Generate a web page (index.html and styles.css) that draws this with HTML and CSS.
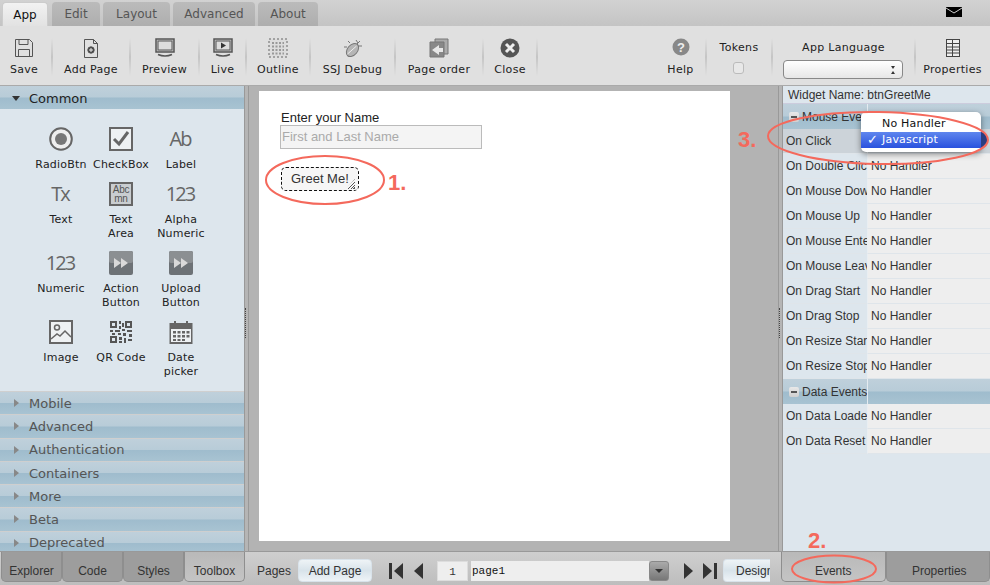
FILE: index.html
```html
<!DOCTYPE html>
<html lang="en">
<head>
  <meta charset="UTF-8">
  <title>App Builder</title>
  <link rel="stylesheet" href="styles.css">
</head>
<body>

  <div class="tabbar">
    <div class="tab active">App</div>
    <div class="tab t-edit">Edit</div>
    <div class="tab t-layout">Layout</div>
    <div class="tab t-adv">Advanced</div>
    <div class="tab t-about">About</div>
    <svg class="mail" width="16" height="10" viewBox="0 0 16 10"><rect width="16" height="10" fill="#000"/><path d="M0 1l8 5 8-5" fill="none" stroke="#ccc" stroke-width="1"/></svg>
  </div>

  <div class="toolbar">
    <div class="tool first">
      <svg width="20" height="20" viewBox="0 0 20 20" fill="none" stroke="#555"><path d="M1.500 1.500h14l3 3v14h-17z"/><path d="M5 1.500v5h9v-5M4.500 18.500v-7h11v7"/></svg>
      <span>Save</span>
    </div>
    <div class="tool">
      <svg width="20" height="20" viewBox="0 0 20 20" fill="none" stroke="#555"><path d="M3.500 1.500h9l4 4v14h-13z"/><path d="M12.500 1.500v4h4"/><circle cx="10" cy="12" r="3.200" fill="#444"/><path d="M8 12h4M10 10v4" stroke="#eee"/></svg>
      <span>Add Page</span>
    </div>
    <div class="tool">
      <svg width="20" height="20" viewBox="0 0 20 20" fill="none" stroke="#555"><rect x="1" y="1" width="18" height="13" fill="#ccc" stroke-width="1.500"/><rect x="3" y="3" width="14" height="9" fill="#ddd"/><path d="M3 16.500q7 3 14 0" stroke-width="1.500"/></svg>
      <span>Preview</span>
    </div>
    <div class="tool">
      <svg width="20" height="20" viewBox="0 0 20 20" fill="none" stroke="#555"><rect x="1" y="1" width="18" height="13" fill="#ccc" stroke-width="1.500"/><rect x="3" y="3" width="14" height="9" fill="#ddd"/><path d="M8 4.500l5 3-5 3z" fill="#333" stroke="none"/><path d="M3 16.500q7 3 14 0" stroke-width="1.500"/></svg>
      <span>Live</span>
    </div>
    <div class="tool">
      <svg width="20" height="20" viewBox="0 0 20 20" fill="none"><rect x="1" y="1" width="18" height="18" fill="#ddd" stroke="#666" stroke-dasharray="2 2"/><path d="M4 5h12M4 8.500h12M4 12h12M4 15.500h12" stroke="#999" stroke-width="2" stroke-dasharray="2 1.500"/></svg>
      <span>Outline</span>
    </div>
    <div class="tool">
      <svg width="20" height="20" viewBox="0 0 20 20" fill="none" stroke="#777"><path d="M13 2l2 3M17 3l-3 3M16 8h3M7 5L5 3M4 9H1"/><ellipse cx="9.500" cy="12" rx="5" ry="7.500" transform="rotate(40 9.500 12)" fill="#b5b5b5"/><path d="M4.500 16l9-8" stroke="#eee"/></svg>
      <span>SSJ Debug</span>
    </div>
    <div class="tool">
      <svg width="20" height="20" viewBox="0 0 20 20"><path d="M6 1h13v15H6z" fill="#aaa" stroke="#777"/><path d="M1 4h14v15H1z" fill="#888" stroke="#777"/><path d="M3 12l7-5v3h4v4h-4v3z" fill="#e6e6e6"/></svg>
      <span>Page order</span>
    </div>
    <div class="tool">
      <svg width="20" height="20" viewBox="0 0 20 20"><circle cx="10" cy="10" r="9.500" fill="#555"/><path d="M6 6l8 8M14 6l-8 8" stroke="#eee" stroke-width="3"/></svg>
      <span>Close</span>
    </div>
    <div class="tool-space"></div>
    <div class="tool">
      <svg width="18" height="20" viewBox="0 0 18 20"><circle cx="9" cy="9" r="8.500" fill="#888"/><text x="9" y="13.500" class="help-mark">?</text></svg>
      <span>Help</span>
    </div>
    <div class="tool top">
      <span>Tokens</span>
      <div class="check"></div>
    </div>
    <div class="tool top">
      <span>App Language</span>
      <div class="lang-select"><i class="updown"></i></div>
    </div>
    <div class="tool last">
      <svg width="16" height="20" viewBox="0 0 16 20" fill="none" stroke="#444"><rect x="1.500" y="1.500" width="13" height="17" fill="#eee"/><path d="M1.500 5.500h13M1.500 9h13M1.500 12h13M1.500 15h13M7.500 1.500v17"/></svg>
      <span>Properties</span>
    </div>
  </div>

  <div class="main">
    <div class="left-panel">
      <div class="acc-head open"><i class="arrow-down"></i>Common</div>
      <div class="palette">
        <div class="widget">
          <svg width="24" height="24" viewBox="0 0 24 24"><circle cx="12" cy="12" r="10.800" fill="#eee" stroke="#666" stroke-width="2"/><circle cx="12" cy="12" r="6" fill="#777"/></svg>
          <span>RadioBtn</span>
        </div>
        <div class="widget">
          <svg width="24" height="24" viewBox="0 0 24 24"><rect x="1" y="1" width="22" height="22" fill="#eef1f3" stroke="#666" stroke-width="2"/><path d="M5 12l5 5 9-12" fill="none" stroke="#666" stroke-width="3"/></svg>
          <span>CheckBox</span>
        </div>
        <div class="widget">
          <div class="glyph">Ab</div>
          <span>Label</span>
        </div>
        <div class="widget">
          <div class="glyph">Tx</div>
          <span>Text</span>
        </div>
        <div class="widget">
          <div class="glyph-box">Abc<br>mn</div>
          <span>Text<br>Area</span>
        </div>
        <div class="widget">
          <div class="glyph">123</div>
          <span>Alpha<br>Numeric</span>
        </div>
        <div class="widget">
          <div class="glyph">123</div>
          <span>Numeric</span>
        </div>
        <div class="widget">
          <svg width="24" height="24" viewBox="0 0 24 24"><rect width="24" height="24" rx="2" fill="#6d7276"/><rect width="24" height="12" rx="2" fill="#8b8f92"/><path d="M5 7l7 5-7 5zM12 7l7 5-7 5z" fill="#d9d9d9"/></svg>
          <span>Action<br>Button</span>
        </div>
        <div class="widget">
          <svg width="24" height="24" viewBox="0 0 24 24"><rect width="24" height="24" rx="2" fill="#6d7276"/><rect width="24" height="12" rx="2" fill="#8b8f92"/><path d="M5 7l7 5-7 5zM12 7l7 5-7 5z" fill="#d9d9d9"/></svg>
          <span>Upload<br>Button</span>
        </div>
        <div class="widget">
          <svg width="24" height="24" viewBox="0 0 24 24" fill="none" stroke="#666"><rect x="1" y="1" width="22" height="22" fill="#eef1f3" stroke-width="2"/><circle cx="8" cy="7.500" r="2.500" stroke-width="1.500"/><path d="M2 19l6-5 3 2 5-5 6 6" stroke-width="1.500"/></svg>
          <span>Image</span>
        </div>
        <div class="widget">
          <svg width="24" height="24" viewBox="0 0 24 24" fill="#555"><path d="M1 1h7v7H1zM16 1h7v7h-7zM1 16h7v7H1z"/><path d="M3 3h3v3H3zM18 3h3v3h-3zM3 18h3v3H3z" fill="#dde6ed"/><path d="M10 1h2v3h-2zM13 3h2v4h-2zM10 6h2v3h-2zM1 10h3v2H1zM6 10h5v2H6zM13 9h3v2h-3zM18 10h5v2h-5zM9 13h3v2H9zM14 13h3v3h-3zM20 14h3v3h-3zM3 13h3v2H3zM10 17h3v3h-3zM15 18h2v5h-2zM19 19h4v2h-4zM10 21h3v2h-3z"/></svg>
          <span>QR Code</span>
        </div>
        <div class="widget">
          <svg width="24" height="24" viewBox="0 0 24 24"><rect x="0.500" y="3" width="23" height="21" fill="#666"/><rect x="2" y="9" width="20" height="13" fill="#eef1f3"/><path d="M6 1v5M18 1v5" stroke="#666" stroke-width="2"/><path d="M4 11h3v2.500H4zM8.500 11h3v2.500h-3zM13 11h3v2.500h-3zM17.500 11h3v2.500h-3zM4 15h3v2.500H4zM8.500 15h3v2.500h-3zM13 15h3v2.500h-3zM17.500 15h3v2.500h-3zM4 19h3v2H4zM8.500 19h3v2h-3zM13 19h3v2h-3z" fill="#666"/></svg>
          <span>Date<br>picker</span>
        </div>
      </div>
      <div class="acc-head"><i class="arrow-right"></i>Mobile</div>
      <div class="acc-head"><i class="arrow-right"></i>Advanced</div>
      <div class="acc-head"><i class="arrow-right"></i>Authentication</div>
      <div class="acc-head"><i class="arrow-right"></i>Containers</div>
      <div class="acc-head"><i class="arrow-right"></i>More</div>
      <div class="acc-head"><i class="arrow-right"></i>Beta</div>
      <div class="acc-head"><i class="arrow-right"></i>Deprecated</div>
    </div>

    <div class="splitter"><i class="grip"></i></div>

    <div class="stage">
      <div class="canvas">
        <label class="field-label">Enter your Name</label>
        <div class="field-input">First and Last Name</div>
        <div class="greet-btn">Greet Me!<i class="resize"></i></div>
      </div>
    </div>

    <div class="splitter"><i class="grip"></i></div>

    <div class="right-panel">
      <div class="widget-name">Widget Name: btnGreetMe</div>
      <div class="ev-head"><div class="ev-title"><i class="minus"></i>Mouse Events</div><div></div></div>
      <div class="ev-row hover"><div>On Click</div><div></div></div>
      <div class="ev-row"><div>On Double Click</div><div>No Handler</div></div>
      <div class="ev-row"><div>On Mouse Down</div><div>No Handler</div></div>
      <div class="ev-row"><div>On Mouse Up</div><div>No Handler</div></div>
      <div class="ev-row"><div>On Mouse Enter</div><div>No Handler</div></div>
      <div class="ev-row"><div>On Mouse Leave</div><div>No Handler</div></div>
      <div class="ev-row"><div>On Drag Start</div><div>No Handler</div></div>
      <div class="ev-row"><div>On Drag Stop</div><div>No Handler</div></div>
      <div class="ev-row"><div>On Resize Start</div><div>No Handler</div></div>
      <div class="ev-row"><div>On Resize Stop</div><div>No Handler</div></div>
      <div class="ev-head"><div class="ev-title"><i class="minus"></i>Data Events</div><div></div></div>
      <div class="ev-row"><div>On Data Loaded</div><div>No Handler</div></div>
      <div class="ev-row"><div>On Data Reset</div><div>No Handler</div></div>
    </div>
  </div>

  <div class="bottom">
    <div class="bottom-tabs left-tabs">
      <div class="btab">Explorer</div>
      <div class="btab">Code</div>
      <div class="btab">Styles</div>
      <div class="btab active">Toolbox</div>
    </div>
    <div class="pager">
      <span class="pages-label">Pages</span>
      <div class="soft-btn add-page">Add Page</div>
      <svg class="pager-first" width="15" height="16" viewBox="0 0 15 16" fill="#333"><rect x="0" y="0" width="3" height="16"/><path d="M14 0v16L5 8z"/></svg>
      <svg class="pager-prev" width="10" height="16" viewBox="0 0 10 16" fill="#333"><path d="M9 0v16L0 8z"/></svg>
      <div class="page-num">1</div>
      <div class="page-name">page1</div>
      <div class="page-drop"><i></i></div>
      <svg class="pager-next" width="10" height="16" viewBox="0 0 10 16" fill="#333"><path d="M1 0v16l9-8z"/></svg>
      <svg class="pager-last" width="15" height="16" viewBox="0 0 15 16" fill="#333"><path d="M1 0v16l9-8z"/><rect x="12" y="0" width="3" height="16"/></svg>
      <div class="soft-btn design">Design</div>
    </div>
    <div class="bottom-tabs right-tabs">
      <div class="btab active">Events</div>
      <div class="btab props">Properties</div>
    </div>
  </div>

  <div class="menu">
    <div class="menu-item">No Handler</div>
    <div class="menu-item selected"><span class="tick">✓</span>Javascript</div>
  </div>
  <div class="select-end"></div>

  <svg class="marks" width="990" height="585" viewBox="0 0 990 585" fill="none" stroke="#f4695c" stroke-width="2">
    <ellipse cx="325" cy="180" rx="59" ry="24"/>
    <ellipse cx="878" cy="138" rx="110" ry="26" transform="rotate(1 878 138)"/>
    <ellipse cx="834" cy="569" rx="42" ry="13.500"/>
  </svg>
  <div class="num n1">1.</div>
  <div class="num n2">2.</div>
  <div class="num n3">3.</div>

</body>
</html>
```

FILE: styles.css
```css
* {
  box-sizing: border-box;
}

html, body {
  margin: 0;
  height: 585px;
  overflow: hidden;
}

body {
  position: relative;
  width: 990px;
  display: flex;
  flex-direction: column;
  font-family: 'DejaVu Sans', sans-serif;
  font-size: 11px;
  color: #222;
  background: #b3b3b3;
}

/* top tabs */
.tabbar {
  height: 26px;
  flex: none;
  display: flex;
  align-items: flex-end;
  padding-left: 2px;
  gap: 3px;
  background: linear-gradient(#d2d2d2, #c4c4c4);
}

.tab {
  height: 24px;
  width: 60px;
  display: flex;
  align-items: center;
  justify-content: center;
  font-size: 12px;
  color: #555;
  background: linear-gradient(#bbb, #aeaeae);
  border-radius: 4px 4px 0 0;
}

.tab.active {
  width: 46px;
  margin-right: 1px;
  color: #111;
  background: linear-gradient(#f2f2f2, #e2e2e2);
  border: 1px solid #ccc;
  border-bottom: none;
}

.t-edit { width: 48px; }
.t-layout { width: 67px; }
.t-adv { width: 82px; }
.t-about { width: 60px; }

.mail {
  position: absolute;
  left: 946px;
  top: 7px;
}

/* toolbar */
.toolbar {
  height: 59px;
  flex: none;
  display: grid;
  grid-template-columns: 52px 78px 69px 47px 64px 85px 88px 54px 118px 51px 66px 143px 75px;
  background: #e0e0e0;
}

.tool {
  position: relative;
  display: flex;
  flex-direction: column;
  align-items: center;
  padding-top: 12px;
  gap: 5px;
  white-space: nowrap;
  letter-spacing: 0.3px;
}

.tool::after {
  content: "";
  position: absolute;
  right: -1px;
  top: 12px;
  bottom: 9px;
  width: 2px;
  background: linear-gradient(rgba(0,0,0,0), rgba(0,0,0,0.12), rgba(0,0,0,0));
}

.tool.first {
  padding-right: 4px;
}

.tool svg {
  height: 20px;
  flex: none;
}

.tool.top {
  padding-top: 15px;
  gap: 8px;
}

.tool.last::after {
  display: none;
}

.help-mark {
  font-family: 'Liberation Sans', sans-serif;
  font-size: 13px;
  font-weight: bold;
  fill: #eee;
  text-anchor: middle;
}

.check {
  width: 11px;
  height: 12px;
  margin-right: 2px;
  border: 1px solid #bbb;
  border-radius: 3px;
  background: #e8e8e8;
}

.lang-select {
  position: relative;
  width: 120px;
  height: 19px;
  margin-top: -2px;
  margin-right: 2px;
  border: 1px solid #888;
  border-radius: 4px;
  background: linear-gradient(#fff, #e6e6e6);
}

.updown {
  position: absolute;
  right: 7px;
  top: 5px;
  width: 0;
  height: 8px;
  border-left: 2px solid transparent;
  border-right: 2px solid transparent;
  border-top: 3px solid #333;
  border-bottom: 3px solid #333;
}

/* main area */
.main {
  height: 466px;
  flex: none;
  display: flex;
  border-top: 1px solid #aaa;
}

.left-panel {
  width: 244px;
  flex: none;
  display: flex;
  flex-direction: column;
  overflow: hidden;
  background: #dde6ed;
}

.acc-head {
  flex: none;
  height: 23.3px;
  display: flex;
  align-items: center;
  padding-left: 29px;
  position: relative;
  font-size: 13px;
  color: #555;
  background: linear-gradient(#bfd0db 0, #b8ccd8 48%, #9fbccd 52%, #a8c3d2 100%);
  border-top: 1px solid #cfcfcf;
}

.acc-head.open {
  height: 23px;
  padding-top: 2px;
  color: #222;
  border-top: none;
}

.arrow-down {
  position: absolute;
  left: 12px;
  top: 10px;
  border-left: 4px solid transparent;
  border-right: 4px solid transparent;
  border-top: 5px solid #333;
}

.arrow-right {
  position: absolute;
  left: 14px;
  top: 7px;
  border-top: 4px solid transparent;
  border-bottom: 4px solid transparent;
  border-left: 5px solid #888;
}

.palette {
  flex: none;
  height: 282px;
  padding: 18px 0 0 31px;
  display: grid;
  grid-template-columns: repeat(3, 60px);
  grid-auto-rows: min-content;
  row-gap: 10px;
  background: #dde6ed;
}

.widget {
  display: flex;
  flex-direction: column;
  align-items: center;
  gap: 7px;
  text-align: center;
  line-height: 14px;
  white-space: nowrap;
  letter-spacing: 0.2px;
}

.widget svg {
  flex: none;
}

.glyph {
  height: 24px;
  line-height: 24px;
  font-family: 'Open Sans', sans-serif;
  font-size: 20px;
  letter-spacing: -2px;
  padding-right: 2px;
  color: #666;
}

.glyph-box {
  width: 24px;
  height: 24px;
  padding-top: 1px;
  background: #c9cdd0;
  border: 2px solid #666;
  font-family: 'Liberation Sans', sans-serif;
  font-size: 10px;
  line-height: 9px;
  color: #555;
  letter-spacing: -0.3px;
  overflow: hidden;
}

.splitter {
  width: 5px;
  flex: none;
  position: relative;
  background: #b5b5b5;
  border-left: 1px solid #999;
  border-right: 1px solid #999;
}

.grip {
  position: absolute;
  left: 0;
  top: 222px;
  width: 3px;
  height: 30px;
  border-left: 1px dotted #444;
}

/* design canvas */
.stage {
  width: 529px;
  flex: none;
  padding: 5px 0 0 10px;
  background: #b3b3b3;
}

.canvas {
  width: 471px;
  height: 450px;
  padding: 19px 0 0 22px;
  background: #fff;
  font-family: 'Liberation Sans', sans-serif;
  font-size: 13px;
  color: #333;
}

.field-label {
  display: block;
  height: 15px;
  line-height: 15px;
  font-size: 13px;
  color: #222;
}

.field-input {
  width: 202px;
  height: 24px;
  margin-left: -1px;
  padding-left: 1px;
  line-height: 21px;
  border: 1px solid #bbb;
  background: #f4f4f4;
  font-size: 13px;
  color: #aaa;
}

.greet-btn {
  position: relative;
  width: 78px;
  height: 24px;
  margin-top: 18px;
  padding-left: 9px;
  line-height: 22px;
  border: 1px dashed #111;
  border-radius: 5px;
  background: #f6f6f6;
}

.resize {
  position: absolute;
  right: 3px;
  bottom: 1px;
  width: 9px;
  height: 10px;
  background: repeating-linear-gradient(135deg, #555 0 1px, #f6f6f6 1px 2px);
  clip-path: polygon(100% 0, 100% 100%, 0 100%);
}

/* event panel */
.right-panel {
  flex: 1;
  background: #dde6ed;
  font-family: 'Liberation Sans', sans-serif;
  font-size: 12px;
  color: #333;
}

.widget-name {
  height: 18px;
  padding-left: 5px;
  line-height: 18px;
  background: #dde6ed;
  border-bottom: 1px solid #ccd;
}

.ev-row,
.ev-head {
  height: 25px;
  display: grid;
  grid-template-columns: 85px 1fr;
}

.ev-row > div {
  padding-left: 3px;
  line-height: 24px;
  overflow: hidden;
  white-space: nowrap;
  border-bottom: 1px solid #dfe5ea;
}

.ev-row > div:first-child {
  background: #dde6ed;
  border-right: 1px solid #e9eef2;
}

.ev-row > div:last-child {
  background: #eeeeee;
}

.ev-row.hover > div {
  background: #ccd3d9;
}

.ev-head {
  background: linear-gradient(#bfd0db 0, #b8ccd8 48%, #9fbccd 52%, #a8c3d2 100%);
}

.ev-title {
  display: flex;
  align-items: center;
  padding-left: 6px;
  overflow: hidden;
  white-space: nowrap;
  border-right: 1px solid #e4ebf0;
}

.minus {
  width: 10px;
  height: 10px;
  flex: none;
  margin-right: 3px;
  border-radius: 2px;
  background: linear-gradient(#e8e8e8, #d0d0d0);
  position: relative;
}

.minus::after {
  content: "";
  position: absolute;
  left: 2px;
  right: 2px;
  top: 4px;
  height: 2px;
  background: #555;
}

/* bottom bar */
.bottom {
  height: 34px;
  flex: none;
  display: flex;
  border-top: 1px solid #999;
  background: linear-gradient(#cfcfcf, #bdbdbd);
  font-family: 'Liberation Sans', sans-serif;
  font-size: 12px;
  color: #333;
}

.bottom-tabs {
  display: flex;
  flex: none;
}

.left-tabs {
  width: 247px;
  padding-left: 1px;
}

.right-tabs {
  width: 209px;
}

.btab {
  width: 61px;
  height: 30px;
  padding-top: 8px;
  display: flex;
  align-items: center;
  justify-content: center;
  background: #9d9d9d;
  border: 1px solid #8e8e8e;
  border-top: none;
  border-radius: 0 0 5px 5px;
}

.btab.active {
  background: linear-gradient(#b9b9b9, #c4c4c4);
}

.right-tabs .btab {
  width: 105px;
}

.right-tabs .props {
  padding-left: 3px;
}

.pager {
  flex: 1;
  display: flex;
  align-items: center;
  padding: 4px 0 0 10px;
  overflow: hidden;
  min-width: 0;
}

.pages-label {
  width: 41px;
  flex: none;
}

.soft-btn {
  height: 23px;
  line-height: 22px;
  flex: none;
  text-align: center;
  border: 1px solid #d8e2ea;
  border-radius: 4px;
  background: linear-gradient(#eef3f6, #d8e3ea 50%, #eef3f7);
}

.add-page {
  width: 74px;
}

.pager-first {
  margin-left: 17px;
  flex: none;
}

.pager-prev {
  margin-left: 10px;
  flex: none;
}

.page-num {
  width: 31px;
  height: 20px;
  margin-left: 13px;
  flex: none;
  text-align: center;
  line-height: 20px;
  font-size: 11px;
  background: #eee;
  border: 1px solid #ddd;
  font-family: 'Liberation Mono', monospace;
}

.page-name {
  width: 178px;
  height: 20px;
  margin-left: 3px;
  flex: none;
  padding-left: 1px;
  line-height: 20px;
  background: #eee;
  font-family: 'Liberation Mono', monospace;
  font-size: 11px;
  color: #111;
}

.page-drop {
  width: 20px;
  height: 20px;
  flex: none;
  position: relative;
  background: linear-gradient(#aaa, #777);
  border: 1px solid #888;
  border-radius: 3px;
}

.page-drop i {
  position: absolute;
  left: 5px;
  top: 7px;
  border-left: 4px solid transparent;
  border-right: 4px solid transparent;
  border-top: 4px solid #333;
}

.pager-next {
  margin-left: 14px;
  flex: none;
}

.pager-last {
  margin-left: 9px;
  flex: none;
}

.design {
  width: 47px;
  margin-left: 6px;
  padding-left: 12px;
  text-align: left;
  overflow: hidden;
  white-space: nowrap;
  border-right: none;
  border-radius: 4px 0 0 4px;
}

/* popup menu and annotations */
.menu {
  position: absolute;
  left: 861px;
  top: 112px;
  width: 120px;
  height: 40px;
  padding-top: 4px;
  background: #fff;
  border-radius: 5px;
  box-shadow: 0 2px 6px rgba(0,0,0,0.45);
  font-family: 'DejaVu Sans', sans-serif;
  font-size: 11px;
}

.menu-item {
  height: 16px;
  padding-left: 21px;
  line-height: 15px;
  color: #111;
  letter-spacing: 0.2px;
}

.menu-item.selected {
  position: relative;
  background: linear-gradient(#5f86ee, #2a52de);
  color: #fff;
}

.tick {
  position: absolute;
  left: 6px;
  top: 0;
  font-weight: bold;
  font-size: 13px;
}

.select-end {
  position: absolute;
  left: 981px;
  top: 132px;
  width: 6px;
  height: 16px;
  background: #2a3d80;
  border-radius: 0 6px 6px 0;
}

.marks {
  position: absolute;
  left: 0;
  top: 0;
  pointer-events: none;
}

.num {
  position: absolute;
  font-family: 'Liberation Sans', sans-serif;
  font-size: 22px;
  font-weight: bold;
  line-height: 24px;
  color: #f4695c;
}

.n1 { left: 388px; top: 171px; }
.n2 { left: 808px; top: 529px; }
.n3 { left: 738px; top: 128px; }
```
